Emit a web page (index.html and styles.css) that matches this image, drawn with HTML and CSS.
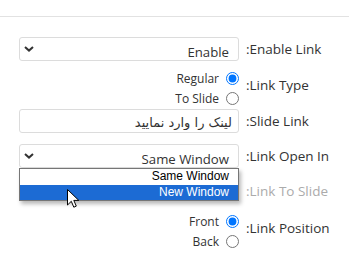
FILE: index.html
```html
<!DOCTYPE html>
<html lang="fa" dir="rtl">
<head>
<meta charset="utf-8">
<link rel="stylesheet" href="styles.css">
</head>
<body>
<div class="topline"></div>
<div class="form">
  <div class="row r1">
    <label class="lbl">Enable Link:</label>
    <div class="ctl">
      <div class="sel"><span class="val">Enable</span><svg class="chev" width="10" height="6" viewBox="0 0 10 6"><path d="M1 1 L5 4.6 L9 1" fill="none" stroke="#333" stroke-width="2"/></svg></div>
    </div>
  </div>
  <div class="row r2 row-radio">
    <label class="lbl">Link Type:</label>
    <div class="ctl radios">
      <label class="opt"><input type="radio" name="t" checked><span>Regular</span></label>
      <label class="opt"><input type="radio" name="t"><span>To Slide</span></label>
    </div>
  </div>
  <div class="row r3">
    <label class="lbl">Slide Link:</label>
    <div class="ctl"><input class="inp" type="text" placeholder="لینک را وارد نمایید"></div>
  </div>
  <div class="row r4">
    <label class="lbl">Link Open In:</label>
    <div class="ctl">
      <div class="sel"><span class="val">Same Window</span><svg class="chev" width="10" height="6" viewBox="0 0 10 6"><path d="M1 1 L5 4.6 L9 1" fill="none" stroke="#333" stroke-width="2"/></svg></div>
      <div class="popup">
        <div class="item">Same Window</div>
        <div class="item hl">New Window</div>
        <svg class="cursor" width="13" height="20" viewBox="0 0 13 20"><path d="M0.5 0.5 L0.5 16 L4.3 12.3 L6.8 18.2 L9.3 17.1 L6.8 11.4 L11.8 11.4 Z" fill="#fff" stroke="#000" stroke-width="1" stroke-linejoin="round"/></svg>
      </div>
    </div>
  </div>
  <div class="row r5">
    <label class="lbl dis">Link To Slide:</label>
    <div class="ctl empty"></div>
  </div>
  <div class="row r6 row-radio">
    <label class="lbl">Link Position:</label>
    <div class="ctl radios">
      <label class="opt"><input type="radio" name="p" checked><span>Front</span></label>
      <label class="opt"><input type="radio" name="p"><span>Back</span></label>
    </div>
  </div>
</div>
</body>
</html>
```
FILE: styles.css
```css
* { box-sizing: border-box; }
html, body { margin: 0; padding: 0; background: #fff; }
body {
  font-family: "Open Sans", "Noto Sans", sans-serif;
  color: #333;
  width: 349px;
  height: 265px;
  overflow: hidden;
}
.topline { margin-top: 16px; height: 1px; background: #e2e2e2; }
.form { padding-top: 20px; }
.row {
  display: grid;
  grid-template-columns: 103px 220px;
  column-gap: 7px;
}
.r2 { margin-top: 8px; }
.r3 { margin-top: 1px; }
.r4 { margin-top: 11px; }
.r5 { margin-top: 11px; }
.r6 { margin-top: 9px; }
.lbl {
  font-size: 13.5px;
  line-height: 20px;
  text-align: left;
  align-self: center;
  color: #333;
}
.row-radio .lbl { align-self: start; padding-top: 6px; }
.lbl.dis { color: #ababab; }
.ctl { position: relative; }
.empty { height: 24px; }
.sel {
  height: 24px;
  border: 1px solid #dcdcdc;
  border-radius: 3px;
  background: #fff;
  display: flex;
  align-items: center;
  justify-content: space-between;
  padding: 0 9px 0 4px;
  font-size: 13.2px;
}
.val { padding-top: 6px; line-height: 18px; }
.chev { display: block; }
.radios { display: flex; flex-direction: column; align-items: flex-start; }
.opt {
  display: flex;
  align-items: center;
  gap: 7px;
  height: 19.5px;
  font-size: 12px;
  color: #333;
}
.opt input { margin: 0; width: 13px; height: 13px; }
.inp {
  display: block;
  width: 100%;
  height: 24px;
  border: 1px solid #dcdcdc;
  border-radius: 3px;
  padding: 2px 6px 0;
  font-family: "DejaVu Sans", sans-serif;
  font-size: 13px;
  text-align: right;
  color: #333;
  background: #fff;
  outline: none;
}
.inp::placeholder { color: #333; opacity: 1; }
.popup {
  position: absolute;
  top: 24px;
  left: 0;
  width: 220px;
  border: 1px solid #767676;
  background: #fff;
  box-shadow: 2px 3px 4px rgba(0, 0, 0, 0.28);
  font-family: "Liberation Sans", Arial, sans-serif;
  font-size: 12px;
  z-index: 2;
}
.item {
  height: 15.5px;
  line-height: 15.5px;
  padding-right: 9px;
  text-align: right;
  color: #000;
}
.item.hl { background: #1c6bd4; color: #fff; }
.cursor { position: absolute; left: 47px; top: 20px; }
```
